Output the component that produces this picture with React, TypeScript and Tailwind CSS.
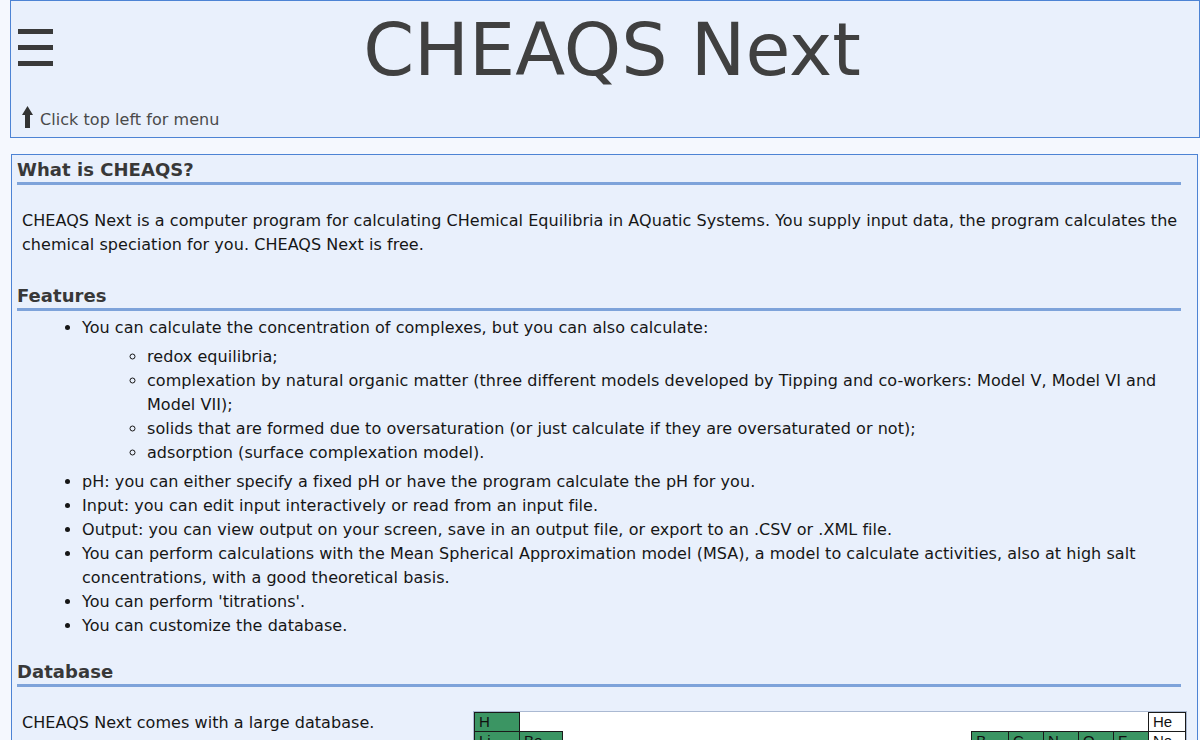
const features = [
  'pH: you can either specify a fixed pH or have the program calculate the pH for you.',
  'Input: you can edit input interactively or read from an input file.',
  'Output: you can view output on your screen, save in an output file, or export to an .CSV or .XML file.',
  'You can perform calculations with the Mean Spherical Approximation model (MSA), a model to calculate activities, also at high salt concentrations, with a good theoretical basis.',
  "You can perform 'titrations'.",
  'You can customize the database.',
];

const extras = [
  'redox equilibria;',
  'complexation by natural organic matter (three different models developed by Tipping and co-workers: Model V, Model VI and Model VII);',
  'solids that are formed due to oversaturation (or just calculate if they are oversaturated or not);',
  'adsorption (surface complexation model).',
];

// 18 columns; null = empty cell, noble gases are drawn white
const rows: (string | null)[][] = [
  ['H', null, null, null, null, null, null, null, null, null, null, null, null, null, null, null, null, 'He'],
  ['Li', 'Be', null, null, null, null, null, null, null, null, null, null, 'B', 'C', 'N', 'O', 'F', 'Ne'],
  ['Na', 'Mg', null, null, null, null, null, null, null, null, null, null, 'Al', 'Si', 'P', 'S', 'Cl', 'Ar'],
  ['K', 'Ca', 'Sc', 'Ti', 'V', 'Cr', 'Mn', 'Fe', 'Co', 'Ni', 'Cu', 'Zn', 'Ga', 'Ge', 'As', 'Se', 'Br', 'Kr'],
];
const noble = new Set(['He', 'Ne', 'Ar', 'Kr']);
const colWidths = [45, 43, 41, 41, 41, 41, 41, 41, 41, 41, 41, 41, 37, 35, 35, 35, 35, 37];

const SectionHeading = ({ children, className = '' }: { children: string; className?: string }) => (
  <h2
    className={`mr-[6px] border-b-[3px] border-[#7ea3da] pb-px text-[18px] font-bold leading-[22px] text-[#383838] ${className}`}
  >
    {children}
  </h2>
);

const PeriodicTable = () => (
  <div className="w-[714px] shrink-0 border border-[#aab9d2] bg-white">
    <table className="table-fixed border-collapse font-['Liberation_Sans',Arial,sans-serif] text-[15px] leading-[18px] tracking-normal text-[#111]">
      <colgroup>
        {colWidths.map((w, i) => (
          <col key={i} style={{ width: w }} />
        ))}
      </colgroup>
      <tbody>
        {rows.map((row, r) => (
          <tr key={r}>
            {row.map((el, c) =>
              el ? (
                <td
                  key={c}
                  className={`border border-[#1a1a1a] pl-[4px] ${noble.has(el) ? 'bg-white' : 'bg-[#3b9563]'}`}
                >
                  {el}
                </td>
              ) : (
                <td key={c} />
              ),
            )}
          </tr>
        ))}
      </tbody>
    </table>
  </div>
);

export default function App() {
  return (
    <div className="h-[740px] overflow-hidden bg-[#f5f8fe] font-['DejaVu_Sans',Verdana,sans-serif] text-[16px] leading-[24px] tracking-[0.05px] text-[#161616]">
      <header className="ml-[10px] flex flex-col border border-[#4d83d4] bg-[#e9f0fc] pb-[5px]">
        <div className="flex items-start pt-[6px]">
          <svg className="ml-[7px] mt-[22px] shrink-0" width="35" height="37" viewBox="0 0 35 37" fill="#3a3a3a">
            <rect x="0" y="0" width="35" height="5" />
            <rect x="0" y="16" width="35" height="5" />
            <rect x="0" y="32" width="35" height="5" />
          </svg>
          <h1 className="flex-1 pr-[28px] text-center text-[73px] font-normal leading-[86px] tracking-normal text-[#404040]">
            CHEAQS Next
          </h1>
        </div>
        <div className="mt-[13px] flex items-end gap-[7px] pl-[11px] text-[#4a4a4a]">
          <svg className="mb-[4px] shrink-0" width="11" height="22" viewBox="0 0 11 22" fill="#333">
            <path d="M5.5 0 L11 9 L8 9 L8 22 L3 22 L3 9 L0 9 Z" />
          </svg>
          <span>Click top left for menu</span>
        </div>
      </header>

      <main className="ml-[11px] mr-[2px] mt-[16px] border border-[#4d83d4] bg-[#e9f0fc] pl-[5px] pr-[10px] pt-[4px]">
        <SectionHeading>What is CHEAQS?</SectionHeading>
        <p className="ml-[5px] mr-[4px] mt-[24px]">
          CHEAQS Next is a computer program for calculating CHemical Equilibria in AQuatic Systems. You supply input
          data, the program calculates the chemical speciation for you. CHEAQS Next is free.
        </p>

        <SectionHeading className="mt-[28px]">Features</SectionHeading>
        <ul className="mr-[6px] mt-[5px] list-disc pl-[65px]">
          <li>
            You can calculate the concentration of complexes, but you can also calculate:
            <ul className="my-[5px] list-[circle] pl-[65px]">
              {extras.map((item) => (
                <li key={item}>{item}</li>
              ))}
            </ul>
          </li>
          {features.map((item) => (
            <li key={item}>{item}</li>
          ))}
        </ul>

        <SectionHeading className="mt-[23px]">Database</SectionHeading>
        <div className="mt-[24px] flex items-start">
          <p className="ml-[5px] flex-1 pr-[8px]">
            CHEAQS Next comes with a large database.
            <br />
            For most metals, data are available for complex equilibria with inorganic and organic ligands.
          </p>
          <PeriodicTable />
        </div>
      </main>
    </div>
  );
}
